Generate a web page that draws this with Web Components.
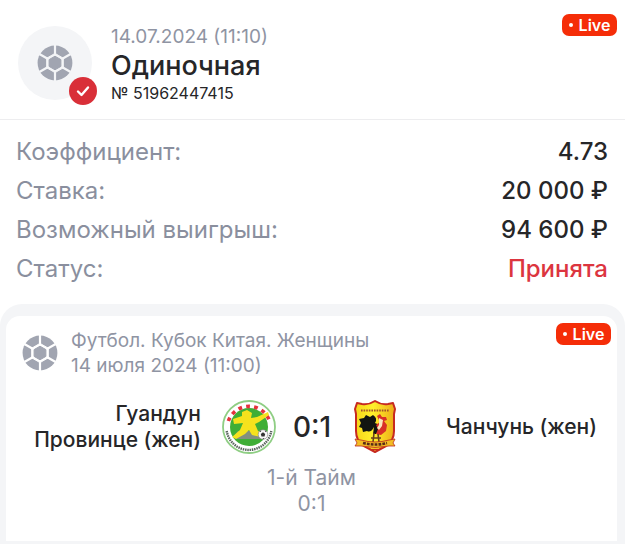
<!DOCTYPE html>
<html lang="ru">
<head>
<meta charset="utf-8">
<meta name="viewport" content="width=device-width, initial-scale=1">
<title>Одиночная ставка</title>
<style>
body { margin: 0; background: #fff; color: #262628; font-family: Inter, "Liberation Sans", sans-serif; }
</style>
</head>
<body>
<bet-page>
  <bet-header date="14.07.2024 (11:10)" name="Одиночная" number="№ 51962447415"></bet-header>
  <bet-summary>
    <bet-row label="Коэффициент:">4.73</bet-row>
    <bet-row label="Ставка:">20 000 ₽</bet-row>
    <bet-row label="Возможный выигрыш:">94 600 ₽</bet-row>
    <bet-row label="Статус:" accent>Принята</bet-row>
  </bet-summary>
  <match-card>
    <span slot="league">Футбол. Кубок Китая. Женщины</span>
    <span slot="date">14 июля 2024 (11:00)</span>
    <span slot="home">Гуандун<br>Провинце (жен)</span>
    <home-logo slot="home-logo"></home-logo>
    <span slot="score">0:1</span>
    <away-logo slot="away-logo"></away-logo>
    <span slot="away">Чанчунь (жен)</span>
    <span slot="period">1-й Тайм</span>
    <span slot="period-score">0:1</span>
  </match-card>
</bet-page>

<script>
const define = (name, markup) => customElements.define(name, class extends HTMLElement {
  constructor() {
    super();
    this.attachShadow({ mode: "open" }).innerHTML = markup;
  }
  connectedCallback() {
    this.shadowRoot.querySelectorAll("[data-attr]").forEach(el => {
      el.textContent = this.getAttribute(el.dataset.attr) || "";
    });
  }
});

define("sport-ball", `
<style>
:host { display: block; width: 36px; height: 36px; color: #a1a5b1; }
svg { display: block; width: 100%; height: 100%; }
.gap { stroke: var(--gap, #fff); fill: var(--gap, #fff); }
</style>
<svg viewBox="-18 -18 36 36" aria-hidden="true">
  <circle r="17.4" fill="currentColor"/>
  <path class="gap" stroke-width="2.2" d="M0-18V18M-15.6-9 15.6 9M-15.6 9 15.6-9"/>
  <path class="gap" stroke-width="1" stroke-linejoin="round" d="M0-9.6 8.3-4.8V4.8L0 9.6-8.3 4.8V-4.8Z"/>
  <path fill="currentColor" stroke="currentColor" stroke-linejoin="round" d="M0-6.8 5.9-3.4V3.4L0 6.8-5.9 3.4V-3.4Z"/>
</svg>`);

define("live-badge", `
<style>
:host { display: flex; align-items: center; justify-content: center; gap: 6px; box-sizing: border-box;
  width: 55px; height: 22px; border-radius: 7px; background: #f52d08; color: #fff;
  font: 600 16px/22px Inter, sans-serif; }
i { width: 4px; height: 4px; border-radius: 50%; background: #fff; }
</style><i></i><span>Live</span>`);

define("bet-header", `
<style>
:host { display: flex; align-items: flex-start; gap: 19px; padding: 25px 8px 15px 18px; border-bottom: 1px solid #ededef; }
.avatar { position: relative; display: grid; place-items: center; width: 74px; height: 74px; margin-top: 1px;
  border-radius: 50%; background: #f4f5f7; --gap: #f4f5f7; }
.check { position: absolute; right: -5px; bottom: -5px; width: 28px; height: 28px; }
.info { flex: 1; }
.date { font-size: 19px; line-height: 24px; color: #8f94a3; }
h1 { margin: 0; font-size: 27px; line-height: 33px; font-weight: 500; }
.num { font-size: 16px; line-height: 22px; }
live-badge { margin-top: -11px; }
</style>
<div class="avatar"><sport-ball></sport-ball>
  <svg class="check" viewBox="0 0 28 28" aria-hidden="true"><circle cx="14" cy="14" r="14" fill="#d92f38"/>
  <path d="M9 14.5 12.5 18 19 10.5" fill="none" stroke="#fff" stroke-width="2.4" stroke-linecap="round" stroke-linejoin="round"/></svg>
</div>
<div class="info"><div class="date" data-attr="date"></div><h1 data-attr="name"></h1><div class="num" data-attr="number"></div></div>
<live-badge></live-badge>`);

define("bet-summary", `
<style>:host { display: block; padding: 12px 17px 16px 16px; }</style><slot></slot>`);

define("bet-row", `
<style>
:host { display: flex; justify-content: space-between; gap: 16px; font-size: 24px; line-height: 39px; }
.label { color: #8a8f9e; }
.value { font-weight: 500; }
:host([accent]) .value { color: #dc353f; }
</style>
<span class="label" data-attr="label"></span><span class="value"><slot></slot></span>`);

define("match-card", `
<style>
:host { display: block; padding: 12px 8px 0 6px; background: #f4f5f7; border-radius: 22px 22px 0 0; }
.card { background: #fff; border-radius: 14px 14px 0 0; padding: 7px 6px 24px 16px; border-bottom: 3px solid #f4f5f7; }
.top { display: flex; align-items: flex-start; gap: 13px; }
sport-ball { margin-top: 12px; }
.info { flex: 1; padding-top: 5px; font-size: 19px; line-height: 25px; color: #8f94a3; }
.info div { white-space: nowrap; }
.match { display: grid; grid-template-columns: 1fr auto 1fr; align-items: center; margin: 22px 14px 0 0; }
.name { font-size: 21px; line-height: 26px; font-weight: 500; text-align: right; }
.center { display: grid; grid-template-columns: 54px 40px 54px; gap: 16px; margin: 0 16px 0 21px; place-items: center; }
.score { font-size: 28px; line-height: 34px; font-weight: 500; white-space: nowrap; }
.period { margin: 11px 10px 0 0; text-align: center; font-size: 21px; line-height: 26px; color: #8f94a3; }
</style>
<div class="card">
  <div class="top"><sport-ball></sport-ball>
    <div class="info"><div><slot name="league"></slot></div><div><slot name="date"></slot></div></div>
    <live-badge></live-badge></div>
  <div class="match">
    <div class="name"><slot name="home"></slot></div>
    <div class="center"><slot name="home-logo"></slot><div class="score"><slot name="score"></slot></div><slot name="away-logo"></slot></div>
    <div class="name"><slot name="away"></slot></div>
  </div>
  <div class="period"><div><slot name="period"></slot></div><div><slot name="period-score"></slot></div></div>
</div>`);

define("home-logo", `
<style>:host { display: block; width: 54px; height: 54px; } svg { display: block; }</style>
<svg width="54" height="54" viewBox="0 0 54 54" aria-hidden="true">
  <circle cx="27" cy="27" r="26" fill="#fff" stroke="#8fce84" stroke-width="1.8"/>
  <circle cx="27" cy="27" r="19" fill="#3fae36"/>
  <path d="M6.4 21A21.8 21.8 0 0 1 47.6 21" fill="none" stroke="#e5323c" stroke-width="3.6" stroke-dasharray="3.8 4.2"/>
  <path d="M4.7 31A22.6 22.6 0 0 0 49.3 31" fill="none" stroke="#59635d" stroke-width="2.4" stroke-dasharray="1.5 .8"/>
  <path d="M16 31H40L45 33Q46 37 42 39H14L12 36Z" fill="#82907f"/>
  <path d="M11 19 20 16 20 12 25 10 30 13 29 18 35 17 46 12 47 15 37 22 33 24 36 31 42 34 39 37 30 35 27 30 23 34 14 39 10 37 18 30 21 23 12 24Z" fill="#f5e21d"/>
  <circle cx="41" cy="34.5" r="4.8" fill="#f8f8f8" stroke="#777" stroke-width=".6"/>
  <path d="M41 32.2 43.2 34 42.5 36.4H39.5L38.8 34ZM37.5 31.6 39.3 30.6 38.9 32ZM44.5 31.6 42.7 30.6 43.3 32ZM40.5 38H42.5L41.5 39Z" fill="#333"/>
</svg>`);

define("away-logo", `
<style>:host { display: block; width: 44px; height: 54px; } svg { display: block; }</style>
<svg width="44" height="54" viewBox="0 0 44 54" aria-hidden="true">
  <defs><linearGradient id="gold"><stop offset="0" stop-color="#f6d51a"/><stop offset=".45" stop-color="#fff02b"/><stop offset="1" stop-color="#edaa18"/></linearGradient></defs>
  <path d="M22 1Q28 5 35 4L40 3 42 9 41 14V31Q41 41 33 46L22 52 11 46Q3 41 3 31V14L2 9 4 3 9 4Q16 5 22 1Z" fill="url(#gold)" stroke="#c72a20" stroke-width="2" stroke-linejoin="round"/>
  <path d="M8 10.5H36" stroke="#a0522b" stroke-width="2" stroke-dasharray="1.6 1"/>
  <path d="M21 27Q18 33 14 31L10 32 9 28 6 27 8 23 6 19 11 18 13 15 17 17 20 15Q25 18 22 23L27 25 26 30 23 34H20Z" fill="#121511"/>
  <path d="M24 16 27 14 29 17 33 17 34 20 31 21 34 25 33 31 28 35 23 34 25 29 23 25 27 22Z" fill="#d82f27"/>
  <path d="M26 18 30 20 29 26 26 30 24 28 26 25Z" fill="#f9e7bd"/>
  <path d="M21 33 20 42M25 34 26 42M18 38H28" stroke="#68401d" stroke-width="1.6"/>
  <path d="M2 39 8 40Q22 44 36 40L42 39 40 43 42 46 36 46Q22 49 8 46L2 46 4 43Z" fill="#f3bd24" stroke="#bb291d" stroke-width=".8"/>
  <path d="M10 43Q22 46 34 43" fill="none" stroke="#592a18" stroke-width="2.6" stroke-dasharray="2.8 1.1"/>
  <path d="M19 49.5H25" stroke="#c72a20" stroke-width="1.4"/>
</svg>`);

define("bet-page", `
<style>:host { display: block; padding-right: 2px; }</style><slot></slot>`);
</script>
</body>
</html>
